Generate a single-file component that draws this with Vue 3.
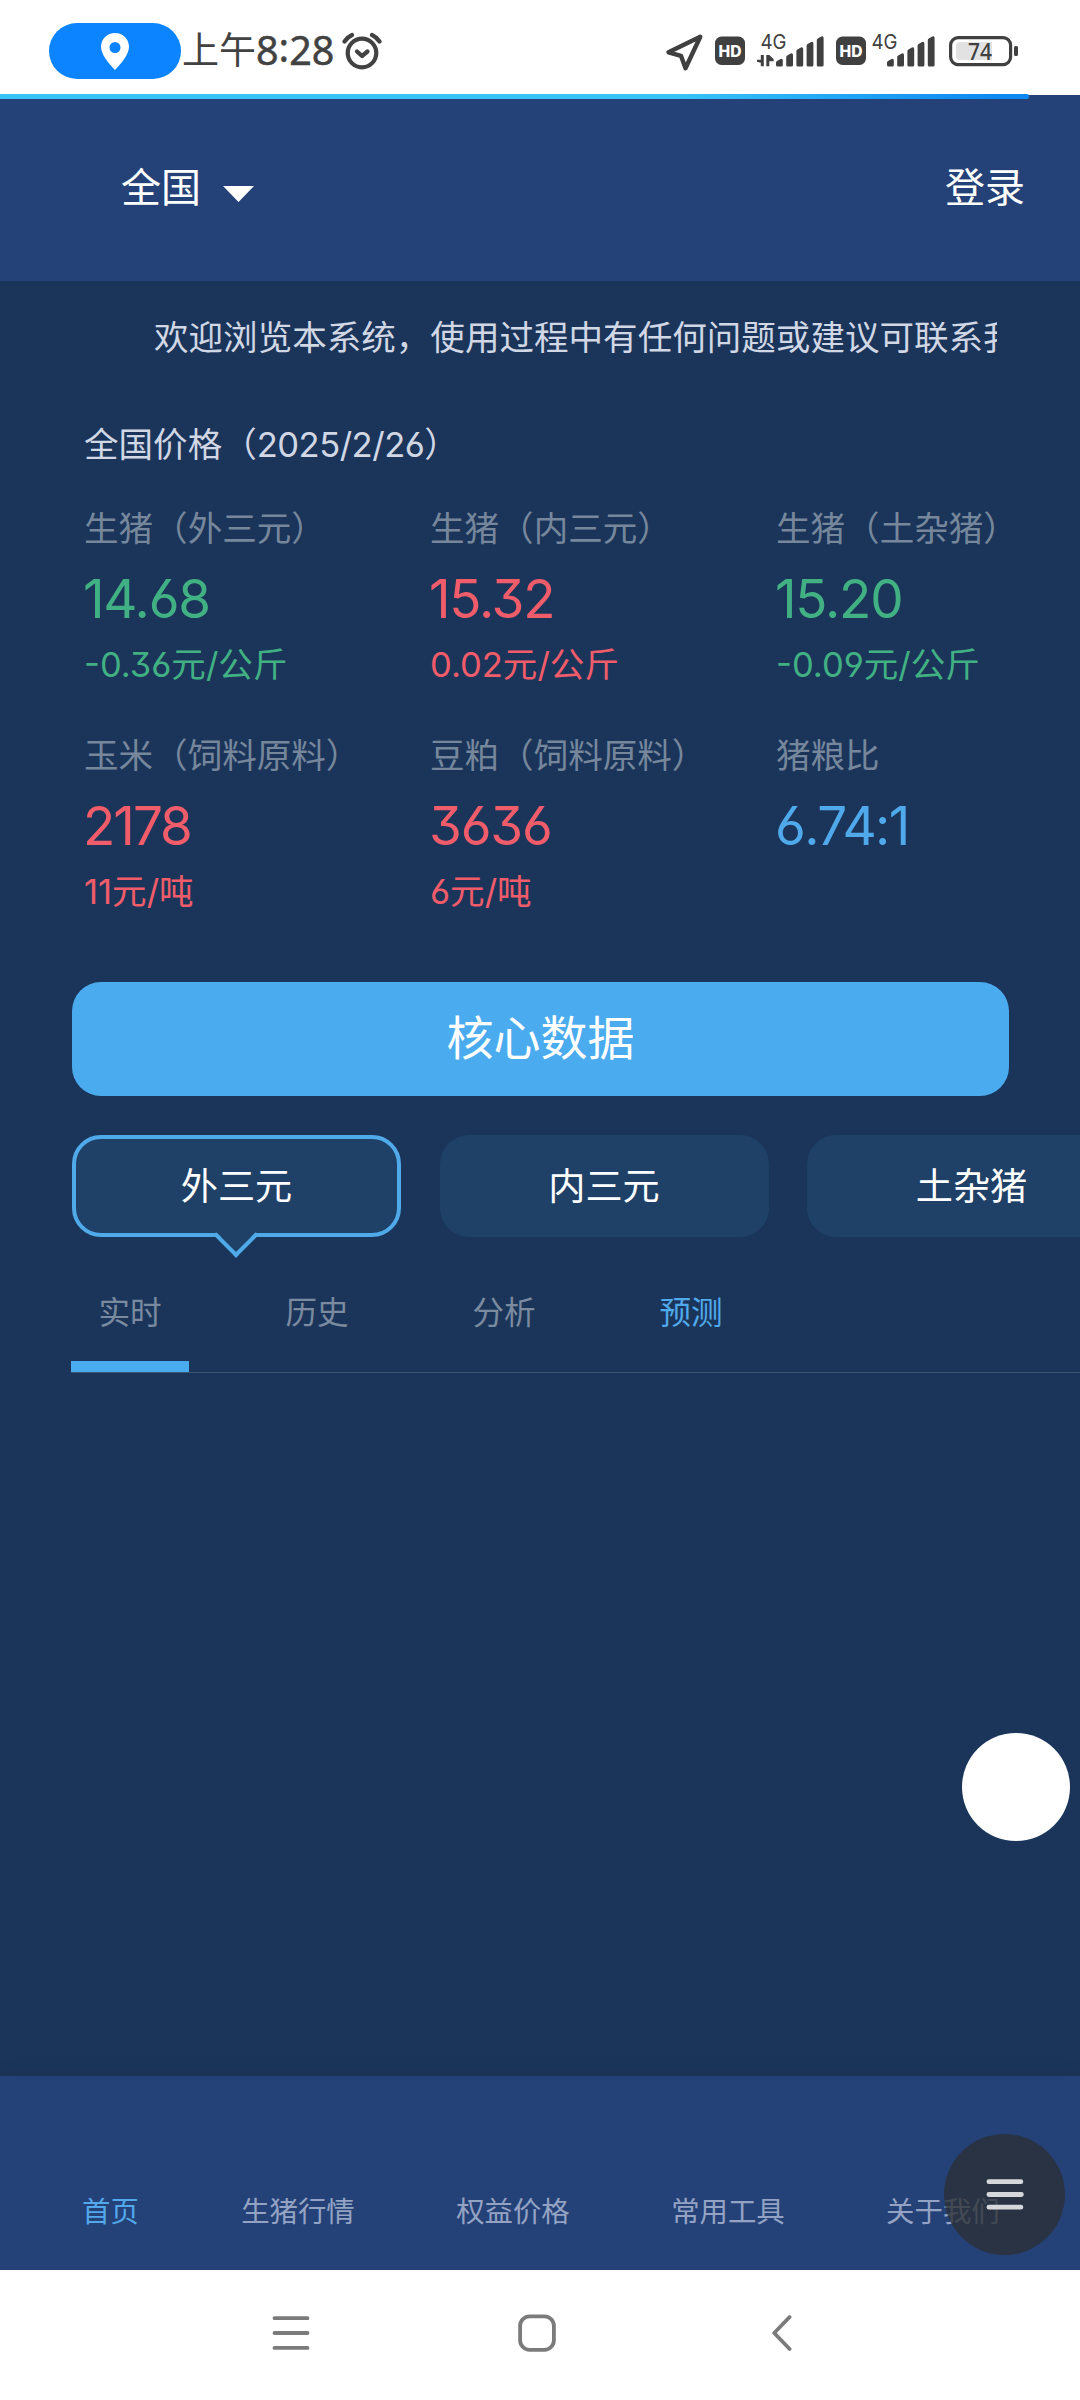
<script setup>
const prices = [
  { name: '生猪（外三元）', value: '14.68', num: '-0.36', unit: '元/公斤', tone: 'down' },
  { name: '生猪（内三元）', value: '15.32', num: '0.02', unit: '元/公斤', tone: 'up' },
  { name: '生猪（土杂猪）', value: '15.20', num: '-0.09', unit: '元/公斤', tone: 'down' },
  { name: '玉米（饲料原料）', value: '2178', num: '11', unit: '元/吨', tone: 'up', tight: true },
  { name: '豆粕（饲料原料）', value: '3636', num: '6', unit: '元/吨', tone: 'up' },
  { name: '猪粮比', value: '6.74:1', num: '', unit: '', tone: 'flat' },
]
const kinds = ['外三元', '内三元', '土杂猪']
const tabs = ['实时', '历史', '分析', '预测']
const navs = ['首页', '生猪行情', '权益价格', '常用工具', '关于我们']
</script>

<template>
  <div class="screen">
    <header class="status">
      <div class="pill">
        <svg width="28" height="37" viewBox="0 0 28 37"><path fill="#fff" fill-rule="evenodd" d="M14 0C6.2 0 0 6 0 13.800c0 8 8 16.800 14 23.200 6-6.400 14-15.200 14-23.200C28 6 21.800 0 14 0zm0 9a5.500 5.500 0 1 1 0 11 5.500 5.500 0 0 1 0-11z" /></svg>
      </div>
      <span class="ampm">上午</span><span class="clock">8<span class="colon">:</span>28</span>
      <svg class="alarm" width="40" height="38" viewBox="0 0 40 38" fill="none" stroke="#424242" stroke-width="4.200" stroke-linecap="round" stroke-linejoin="round">
        <circle cx="20" cy="21" r="14.300" />
        <path d="M15 19.500l5 4.500 5.500-4.500" />
        <path d="M2.500 9.500Q5.500 5 10 3" /><path d="M37.500 9.500Q34.500 5 30 3" />
      </svg>
      <svg class="indicators" width="360" height="46" viewBox="660 28 360 46">
        <path d="M700.300 36.800L668.500 52.300 681 55.800 685.500 68.300z" fill="none" stroke="#404040" stroke-width="4.400" stroke-linejoin="round" />
        <g v-for="x in [715, 836]" :key="x">
          <rect :x="x" y="36.500" width="30" height="28.500" rx="6.500" fill="#404040" />
          <text :x="x + 15" y="56.500" text-anchor="middle" class="hd" textLength="23" lengthAdjust="spacingAndGlyphs">HD</text>
        </g>
        <g v-for="x in [776, 887]" :key="x" fill="#404040">
          <text :x="x - 15.500" y="49" class="gen" textLength="26" lengthAdjust="spacingAndGlyphs">4G</text>
          <path v-for="(t, i) in [59, 53.500, 47.500, 42, 36.500]" :key="t"
            :d="`M${x + i * 10.2} ${t + 3.500}q0-1 1-1.500l3.500-2q2.300-.700 2.300 1.500V65q0 1.500-1.500 1.500h-3.800q-1.500 0-1.500-1.500z`" />
        </g>
        <path fill="#404040" d="M763.800 55v11.300h-3V62.800l-3.800-1v-2h3.800v-4.800zM766.300 55h3l4.300 4v2.300h-4.300v5h-3z" />
        <rect x="950.600" y="37.600" width="60" height="27" rx="7.500" fill="#fff" stroke="#404040" stroke-width="3.200" />
        <path d="M960 42h32v18h-32q-4 0-4-4V46q0-4 4-4z" fill="#e2e2e2" />
        <rect x="1014" y="46" width="4" height="10" rx="1.500" fill="#404040" />
        <text x="968" y="60" class="bat" textLength="24" lengthAdjust="spacingAndGlyphs">74</text>
      </svg>
    </header>

    <div class="topbar">
      <div class="progress"></div>
      <div class="region">
        <span>全国</span>
        <svg width="31" height="16" viewBox="0 0 31 16"><path d="M0 0h31L15.500 16z" fill="#fff" /></svg>
      </div>
      <span>登录</span>
    </div>

    <main class="content">
      <div class="notice">欢迎浏览本系统，使用过程中有任何问题或建议可联系我们</div>
      <div class="headline"><span>全国价格（</span><span class="date">2025/2/26</span><span>）</span></div>
      <section class="grid">
        <div v-for="p in prices" :key="p.name" class="cell" :class="p.tone">
          <div class="name">{{ p.name }}</div>
          <div class="value" :class="{ tight: p.tight }">{{ p.value }}</div>
          <div class="change"><span class="num">{{ p.num }}</span><span>{{ p.unit }}</span></div>
        </div>
      </section>
      <button class="core">核心数据</button>
      <div class="kinds">
        <div v-for="(k, i) in kinds" :key="k" class="kind" :class="{ active: i === 0 }">{{ k }}</div>
      </div>
      <div class="tabs">
        <div v-for="(t, i) in tabs" :key="t" class="tab" :class="{ active: i === 0, forecast: i === 3 }">{{ t }}</div>
      </div>
    </main>

    <nav class="bottom">
      <span v-for="(n, i) in navs" :key="n" :class="{ active: i === 0 }">{{ n }}</span>
    </nav>

    <footer class="system">
      <svg width="38" height="38" viewBox="0 0 38 38" stroke="#7b7b7b" stroke-width="3.800" stroke-linecap="round"><path d="M2.500 4.200h33M2.500 19h33M2.500 33.900h33" /></svg>
      <svg width="38" height="38" viewBox="0 0 38 38" fill="none" stroke="#7b7b7b" stroke-width="3.800"><rect x="2.100" y="2.400" width="33.800" height="33.400" rx="9.500" /></svg>
      <svg class="back" width="20" height="38" viewBox="0 0 20 38" fill="none" stroke="#7b7b7b" stroke-width="3.800" stroke-linecap="round" stroke-linejoin="round"><path d="M17.600 3L2.200 19l15.400 16" /></svg>
    </footer>

    <div class="bubble"></div>
    <div class="fab">
      <svg width="38" height="31" viewBox="0 0 38 31" stroke="#d5d7da" stroke-width="4.800" stroke-linecap="round"><path d="M2.900 2.700h32M2.900 15.500h32.500M2.900 28.200h32" /></svg>
    </div>
  </div>
</template>

<style>
body { background: #1b355a; }
</style>

<style scoped>
.screen {
  position: relative;
  display: flex;
  flex-direction: column;
  width: 1080px;
  height: 2400px;
  overflow: hidden;
  background: #1b355a;
  color: #fff;
  font-family: Inter, "Noto Sans CJK SC", sans-serif;
  font-feature-settings: "cv09", "cv03", "cv04";
}
.status {
  display: flex;
  align-items: center;
  height: 95px;
  padding: 7px 60px 0 49px;
  box-sizing: border-box;
  background: #fff;
  color: #424242;
  flex: none;
}
.pill {
  display: flex;
  align-items: center;
  justify-content: center;
  width: 132px;
  height: 56px;
  border-radius: 28px;
  background: #0c84ff;
}
.ampm { font-size: 37px; line-height: 56px; margin-left: 1px; }
.clock { font-family: "Noto Sans", sans-serif; font-size: 39.500px; line-height: 56px; padding-bottom: 3px; letter-spacing: 0; -webkit-text-stroke: 0.500px #424242; }
.colon { display: inline-block; transform: translateY(-3px); }
.alarm { margin-left: 8px; }
.indicators { margin-left: auto; }
.hd { font: 800 15.500px Inter, sans-serif; fill: #fff; }
.gen { font: 20.500px Inter, sans-serif; }
.bat { font: 500 24px "Noto Sans", sans-serif; fill: #404040; }

.topbar {
  position: relative;
  flex: none;
  display: flex;
  justify-content: space-between;
  align-items: center;
  height: 186px;
  box-sizing: border-box;
  padding: 0 55px 1px 121px;
  background: #254278;
  font-size: 40px;
  line-height: 56px;
}
.progress {
  position: absolute;
  left: 0;
  top: -1px;
  width: 1029px;
  height: 5px;
  border-radius: 0 2px 2px 0;
  background: linear-gradient(90deg, #38c3f8 66%, #0d88f2 97%);
}
.region { display: flex; align-items: center; gap: 22px; }
.region svg { margin-top: 12px; }

.content { flex: 1; min-height: 0; }
.notice {
  margin: 31px 83px 0 84px;
  padding-left: 70px;
  height: 52px;
  line-height: 52px;
  font-size: 34.560px;
  white-space: nowrap;
  overflow: hidden;
  color: #d1d7e4;
}
.headline {
  display: flex;
  margin: 55px 0 0 84px;
  height: 52px;
  line-height: 52px;
  font-size: 34.560px;
  color: #d1d7e4;
}
.date { letter-spacing: -0.500px; }
.grid {
  display: grid;
  grid-template-columns: repeat(3, 346px);
  grid-auto-rows: 227px;
  margin: 32px 0 0 84px;
}
.name { height: 52px; line-height: 52px; font-size: 34.560px; color: #76879c; white-space: nowrap; }
.value { margin: 12px 0 0 -1px; height: 64px; line-height: 64px; font-size: 53px; letter-spacing: -1.200px; }
.flat .value { letter-spacing: -1.600px; }
.value.tight { letter-spacing: -2px; }
.change { display: flex; margin-top: 8px; height: 52px; line-height: 52px; font-size: 34.560px; }
.num { letter-spacing: 0; }
.down { color: #41b183; }
.up { color: #f05c69; }
.flat { color: #50a9ea; }
.core {
  display: block;
  width: 937px;
  height: 114px;
  margin: 25px 0 0 72px;
  padding: 0 0 3px;
  border: 0;
  border-radius: 29px;
  background: #4aabef;
  color: #fff;
  font: 47px/60px Inter, "Noto Sans CJK SC", sans-serif;
}
.kinds { display: flex; gap: 38.500px; margin: 39px 0 0 72px; overflow: visible; }
.kind {
  position: relative;
  flex: none;
  display: flex;
  align-items: center;
  justify-content: center;
  width: 329px;
  height: 102px;
  padding-bottom: 5px;
  box-sizing: border-box;
  border-radius: 29px;
  background: #1f4168;
  font-size: 37.200px;
}
.kind.active { border: 4px solid #50a9e8; }
.kind.active::after {
  content: "";
  position: absolute;
  left: 144px;
  top: 80px;
  width: 32px;
  height: 32px;
  box-sizing: border-box;
  border: solid #50a9e8;
  border-width: 0 4px 4px 0;
  background: linear-gradient(135deg, transparent 45%, #1f4168 45%);
  transform: rotate(45deg);
}
.tabs {
  display: flex;
  gap: 69px;
  margin: 35px 0 0 71px;
  height: 100px;
  border-bottom: 1px solid #3d5473;
}
.tab {
  width: 118px;
  height: 100px;
  box-sizing: border-box;
  padding-top: 17px;
  line-height: 48px;
  text-align: center;
  font-size: 31.600px;
  color: #7a8a9f;
}
.tab.active { border-bottom: 11px solid #4aabef; }
.tab.forecast { color: #50a9ea; }

.bottom {
  flex: none;
  display: flex;
  gap: 101.400px;
  height: 194px;
  box-sizing: border-box;
  padding: 116px 0 0 82px;
  background: #254278;
  box-shadow: 0 0 20px rgba(0, 0, 0, 0.100);
  font-size: 28.400px;
  line-height: 40px;
  white-space: nowrap;
  color: #94a3c4;
}
.bottom .active { color: #52a8ea; margin-right: 1px; }
.system {
  flex: none;
  display: flex;
  align-items: center;
  gap: 208px;
  height: 130px;
  box-sizing: border-box;
  padding: 0 0 5px 271.500px;
  background: #fff;
}
.back { margin-left: 8px; }
.bubble {
  position: absolute;
  left: 962px;
  top: 1733px;
  width: 108px;
  height: 108px;
  border-radius: 50%;
  background: #fff;
}
.fab {
  position: absolute;
  left: 944px;
  top: 2134px;
  width: 121px;
  height: 121px;
  border-radius: 50%;
  background: rgba(43, 48, 53, 0.780);
  display: flex;
  align-items: center;
  justify-content: center;
}
</style>
